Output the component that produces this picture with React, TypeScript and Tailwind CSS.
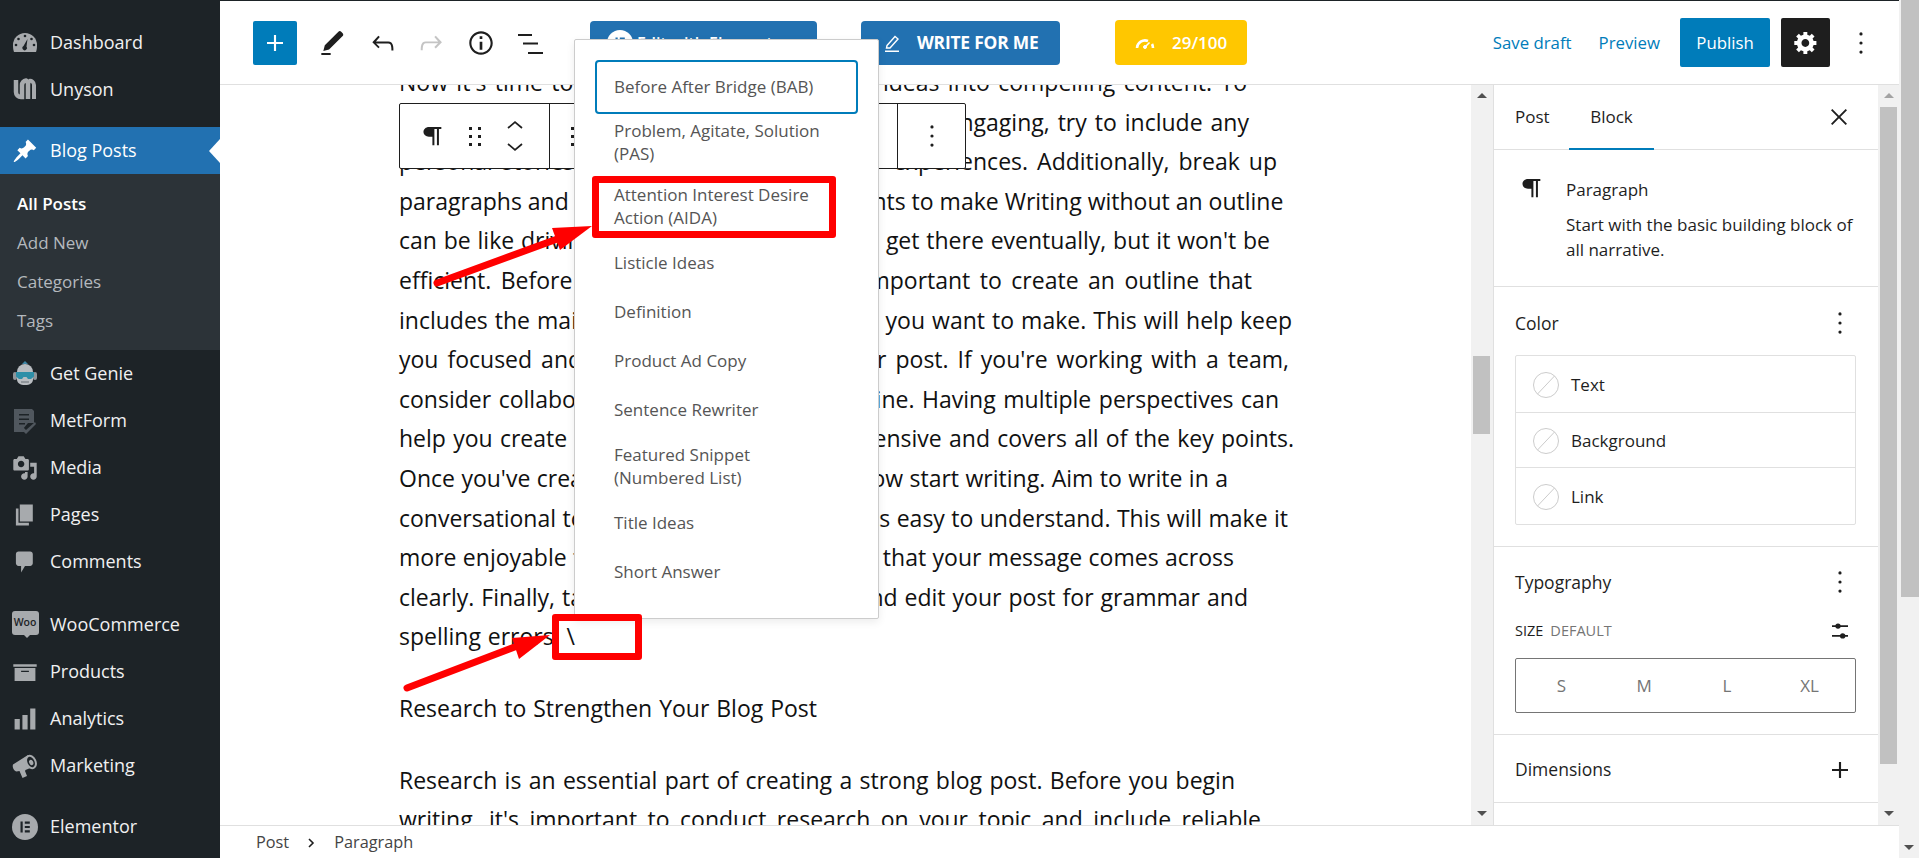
import type { ReactNode } from 'react';

const ic = 'w-[26px] h-[26px] shrink-0';

function Dashboard() {
  return (
    <svg viewBox="0 0 26 26" className={ic}>
      <path fill="#a7aaad" d="M2 22C1.300 20 1 18.500 1 15a12 12 0 0 1 24 0c0 3.500-.3 5-1 7z" />
      <circle cx="13" cy="6" r="1.300" fill="#1d2327" />
      <circle cx="6.500" cy="9" r="1.300" fill="#1d2327" />
      <circle cx="19.500" cy="9" r="1.300" fill="#1d2327" />
      <circle cx="4" cy="15" r="1.300" fill="#1d2327" />
      <circle cx="22" cy="15" r="1.300" fill="#1d2327" />
      <path fill="#1d2327" d="M15.500 9l-1 7.500a2.300 2.300 0 1 1-3-.5z" />
    </svg>
  );
}

function Unyson() {
  return (
    <svg viewBox="0 0 26 26" className={ic}>
      <path fill="none" stroke="#a7aaad" strokeWidth="4.500" d="M4 3v12a5 5 0 0 0 5 5h1V8a4.500 4.500 0 0 1 4-4.500A4 4 0 0 1 16 8v14" />
      <path fill="none" stroke="#a7aaad" strokeWidth="4" d="M22 22V8a4 4 0 0 0-5-4" />
    </svg>
  );
}

function Pin() {
  return (
    <svg viewBox="0 0 20 20" className={ic} fill="#fff">
      <path d="M10.440 3.020l1.820-1.820 6.360 6.350-1.830 1.820c-1.050-.68-2.480-.57-3.410.36l-.75.75c-.92.93-1.040 2.350-.35 3.410l-1.830 1.820-2.410-2.410-2.800 2.790c-.42.42-3.380 2.710-3.800 2.290s1.860-3.390 2.280-3.810l2.790-2.790L4.100 9.360l1.830-1.820c1.050.69 2.480.57 3.400-.36l.75-.75c.93-.92 1.050-2.350.36-3.410z" />
    </svg>
  );
}

function Genie() {
  return (
    <svg viewBox="0 0 26 26" className={ic}>
      <path fill="#3f87a6" d="M13 0l3 3h-6z" />
      <path fill="#b9bdc1" d="M5 11a8 8 0 0 1 16 0v7c0 4-3 6-8 6s-8-2-8-6z" />
      <rect x="1" y="11" width="4" height="8" rx="2" fill="#8f959a" />
      <rect x="21" y="11" width="4" height="8" rx="2" fill="#8f959a" />
      <path fill="#2e8fa8" d="M4 11h18v4.500l-3 2.500h-3l-1.500-2h-3L10 18H7l-3-2.500z" />
      <rect x="9" y="20" width="8" height="2" fill="#8f959a" />
    </svg>
  );
}

function MetForm() {
  return (
    <svg viewBox="0 0 26 26" className={ic}>
      <path fill="#50575e" d="M2 1h18l2 2v12l-6 0-5 6 2 3H2z" />
      <path fill="#1d2327" d="M7 6h10v1.500H7zM7 10.500h10V12H7zM7 15h6v1.500H7z" />
      <path fill="#50575e" d="M11 19l3 3 9-8 1 2-10 10-5-5z" />
    </svg>
  );
}

function Media() {
  return (
    <svg viewBox="0 0 20 20" className={ic} fill="#a7aaad">
      <path d="M13 11V4c0-.55-.45-1-1-1h-1.670L9 1H5L3.670 3H2c-.55 0-1 .45-1 1v7c0 .55.45 1 1 1h10c.55 0 1-.45 1-1zM7 4.500c1.380 0 2.500 1.120 2.500 2.500S8.380 9.500 7 9.500 4.500 8.380 4.500 7 5.620 4.500 7 4.500zM14 6h5v10.500c0 1.380-1.120 2.500-2.500 2.500S14 17.880 14 16.500s1.120-2.500 2.500-2.500c.17 0 .34.02.5.05V9h-3V6zm-4 8.050V13h2v3.500c0 1.380-1.120 2.500-2.500 2.500S7 17.880 7 16.500 8.120 14 9.500 14c.17 0 .34.02.5.05z" />
    </svg>
  );
}

function Pages() {
  return (
    <svg viewBox="0 0 20 20" className={ic} fill="#a7aaad">
      <path d="M6 15V2h10v13H6zm-1 1h8v2H3V5h2v11z" />
    </svg>
  );
}

function Comments() {
  return (
    <svg viewBox="0 0 20 20" className={ic} fill="#a7aaad">
      <path d="M5 2h9c1.100 0 2 .9 2 2v7c0 1.100-.9 2-2 2h-4l-3 5v-5H5c-1.100 0-2-.9-2-2V4c0-1.100.9-2 2-2z" />
    </svg>
  );
}

function Woo() {
  return (
    <span className="relative -mt-[4px] flex h-[24px] w-[27px] shrink-0 items-center justify-center rounded-[3px] bg-[#a7aaad] text-[10.500px] font-semibold leading-none text-[#1d2327]">
      Woo
      <span className="absolute -bottom-[3px] left-[12px] h-0 w-0 border-x-[3px] border-t-[3px] border-x-transparent border-t-[#a7aaad]" />
    </span>
  );
}

function Products() {
  return (
    <svg viewBox="0 0 20 20" className={ic} fill="#a7aaad">
      <path d="M19 4v2H1V4h18zM2 7h16v10H2V7zm11 3V9H7v1h6z" />
    </svg>
  );
}

function Analytics() {
  return (
    <svg viewBox="0 0 20 20" className={ic} fill="#a7aaad">
      <path d="M18 18V2h-4v16h4zm-6 0V7H8v11h4zm-6 0v-8H2v8h4z" />
    </svg>
  );
}

function Marketing() {
  return (
    <svg viewBox="0 0 26 26" className={ic}>
      <path fill="#a7aaad" d="M1 11.500L16 2l7 11-9.500 4-.5 1 2 5-4.500 2-3-7-3 .5C2 18 0 14 1 11.500z" />
      <ellipse cx="19" cy="9" rx="5.500" ry="7.500" transform="rotate(-25 19 9)" fill="#a7aaad" />
      <ellipse cx="19" cy="9" rx="3.500" ry="5.500" transform="rotate(-25 19 9)" fill="#1d2327" />
      <ellipse cx="19" cy="9.500" rx="2" ry="2.800" transform="rotate(-25 19 9)" fill="#a7aaad" />
    </svg>
  );
}

function ElementorLogo({ bg, fg }: { bg: string; fg: string }) {
  return (
    <svg viewBox="0 0 26 26" className={ic}>
      <circle cx="13" cy="13" r="13" fill={bg} />
      <path fill={fg} d="M8.500 7.500h2.200v11H8.500zM12.800 7.500h5v2.200h-5zM12.800 11.900h5v2.200h-5zM12.800 16.300h5v2.200h-5z" />
    </svg>
  );
}

function NavItem({ icon, label, active }: { icon: ReactNode; label: string; active?: boolean }) {
  return (
    <div className={`relative flex h-[47px] items-center ${active ? 'bg-[#2271b1] text-white' : 'text-[#f0f0f1]'}`}>
      <span className="flex w-[50px] shrink-0 justify-center">{icon}</span>
      <span className="text-[18px]">{label}</span>
      {active && (
        <span className="absolute right-0 top-[12px] h-0 w-0 border-y-[12px] border-r-[11px] border-y-transparent border-r-white" />
      )}
    </div>
  );
}

function Sidebar() {
  return (
    <aside className="w-[220px] shrink-0 bg-[#1d2327] pt-[19px]">
      <NavItem icon={<Dashboard />} label="Dashboard" />
      <NavItem icon={<Unyson />} label="Unyson" />
      <div className="h-[14px]" />
      <NavItem icon={<Pin />} label="Blog Posts" active />
      <div className="h-[176px] bg-[#2c3338] pl-[17px] pt-[10px] text-[17px] leading-[39px] text-[#b4b9be]">
        <div className="font-semibold text-white">All Posts</div>
        <div>Add New</div>
        <div>Categories</div>
        <div>Tags</div>
      </div>
      <NavItem icon={<Genie />} label="Get Genie" />
      <NavItem icon={<MetForm />} label="MetForm" />
      <NavItem icon={<Media />} label="Media" />
      <NavItem icon={<Pages />} label="Pages" />
      <NavItem icon={<Comments />} label="Comments" />
      <div className="h-[16px]" />
      <NavItem icon={<Woo />} label="WooCommerce" />
      <NavItem icon={<Products />} label="Products" />
      <NavItem icon={<Analytics />} label="Analytics" />
      <NavItem icon={<Marketing />} label="Marketing" />
      <div className="h-[14px]" />
      <NavItem icon={<ElementorLogo bg="#a7aaad" fg="#1d2327" />} label="Elementor" />
    </aside>
  );
}

function Dots({ className = '' }: { className?: string }) {
  return (
    <svg viewBox="0 0 24 24" className={`h-[32px] w-[32px] ${className}`} fill="#1e1e1e">
      <circle cx="12" cy="5.200" r="1.200" />
      <circle cx="12" cy="12" r="1.200" />
      <circle cx="12" cy="18.800" r="1.200" />
    </svg>
  );
}

function Icon24({ d, className = '', fill = '#1e1e1e' }: { d: string; className?: string; fill?: string }) {
  return (
    <svg viewBox="0 0 24 24" className={`h-[32px] w-[32px] shrink-0 ${className}`} fill={fill}>
      <path d={d} />
    </svg>
  );
}

function Header() {
  return (
    <header className="flex h-[84px] shrink-0 items-center border-b border-[#e0e0e0] bg-white pl-[33px]">
      <button className="flex h-[44px] w-[44px] items-center justify-center rounded-[2px] bg-[#007cba]">
        <Icon24 fill="#fff" d="M18 11.200h-5.200V6h-1.600v5.200H6v1.600h5.200V18h1.600v-5.200H18z" />
      </button>
      <Icon24 className="ml-[19px]" d="M4 21h7v-1.500H4V21zM18.900 3.500c-.6-.6-1.500-.6-2.100 0L6.600 13.700l-1.100 4.300 4.300-1.100L20 6.700c.6-.6.6-1.500 0-2.100l-1.100-1.100z" />
      <Icon24 className="ml-[19px]" d="M18.300 11.700c-.6-.6-1.400-.9-2.300-.9H6.700l2.900-3.300-1.100-1-4.500 5L8.500 16l1-1-2.700-2.700H16c.5 0 .9.2 1.300.5 1 1 1 3.400 1 4.500v.3h1.500v-.2c0-1.500 0-4.300-1.500-5.700z" />
      <Icon24 className="ml-[16px]" fill="#c4c4c4" d="M15.600 6.500l-1.100 1 2.900 3.300H8c-.9 0-1.700.3-2.300.9-1.400 1.500-1.400 4.200-1.400 5.600v.2h1.500v-.3c0-1.100 0-3.500 1-4.500.3-.3.7-.5 1.300-.5h9.200L14.500 15l1.100 1.100 4.600-4.600-4.600-5z" />
      <Icon24 className="ml-[18px]" d="M12 3.200c-4.800 0-8.800 3.900-8.800 8.800 0 4.800 3.900 8.800 8.800 8.800 4.800 0 8.800-3.900 8.800-8.800 0-4.800-4-8.800-8.800-8.800zm0 16c-4 0-7.200-3.300-7.200-7.200C4.800 8 8 4.800 12 4.800s7.200 3.300 7.200 7.200c0 4-3.200 7.200-7.200 7.200zM11 17h2v-6h-2v6zm0-8h2V7h-2v2z" />
      <svg viewBox="0 0 32 32" className="ml-[17px] h-[32px] w-[32px] shrink-0" fill="#1e1e1e">
        <path d="M4 7h14v2H4zM9 15.500h15v2H9zM14 25h15v2H14z" />
      </svg>
      <button className="ml-[44px] flex h-[44px] w-[227px] items-center rounded-[4px] bg-[#2271b1] pl-[17px] text-[16px] font-semibold text-white">
        <ElementorLogo bg="#fff" fg="#2271b1" />
        <span className="ml-[4px]">Edit with Elementor</span>
      </button>
      <button className="ml-[44px] flex h-[44px] w-[199px] items-center rounded-[4px] bg-[#2271b1] pl-[21px] text-[17.400px] font-bold text-white">
        <svg viewBox="0 0 20 20" className="h-[20px] w-[20px] shrink-0" fill="none" stroke="#fff" strokeWidth="1.400">
          <path d="M5 12.500L13 3.500l3 2.500-8 9H4.500zM3 18.300h14" />
        </svg>
        <span className="ml-[15px] tracking-[-0.2px]">WRITE FOR ME</span>
      </button>
      <button className="ml-[55px] flex h-[45px] w-[132px] items-center rounded-[4px] bg-[#ffc700] pl-[20px] text-[17px] font-semibold text-white">
        <svg viewBox="0 0 20 14" className="h-[14px] w-[20px] shrink-0" fill="none" stroke="#fff" strokeWidth="2.600">
          <path d="M2 12a8 8 0 0 1 11-7" />
          <path d="M18 12a8 8 0 0 0-1-4" />
          <circle cx="10" cy="11" r="1.500" fill="#fff" strokeWidth="1" />
          <path d="M10.500 10.500l4-4" strokeWidth="1.600" />
        </svg>
        <span className="ml-[17px]">29/100</span>
      </button>
      <div className="flex-1" />
      <span className="text-[16.800px] text-[#007cba]">Save draft</span>
      <span className="ml-[27px] text-[16.800px] text-[#007cba]">Preview</span>
      <button className="ml-[20px] flex h-[49px] w-[90px] items-center justify-center rounded-[2px] bg-[#007cba] text-[16.800px] text-white">Publish</button>
      <button className="ml-[11px] flex h-[49px] w-[49px] items-center justify-center rounded-[2px] bg-[#1e1e1e]">
        <svg viewBox="0 0 20 20" className="h-[26px] w-[26px]" fill="#fff">
          <path d="M18 11.500h-2.180c-.17.7-.44 1.350-.81 1.930l1.540 1.540-2.100 2.100-1.540-1.540c-.58.36-1.230.63-1.910.79V18.500h-3v-2.180c-.68-.16-1.330-.43-1.910-.79L4.550 17.070 2.430 14.950l1.540-1.540c-.36-.58-.63-1.230-.79-1.910H1V8.530h2.170c.16-.7.44-1.350.8-1.940L2.430 5.050l2.100-2.100 1.540 1.540c.58-.37 1.240-.64 1.930-.81V1.500h3v2.180c.68.16 1.330.43 1.910.79l1.540-1.540 2.120 2.120-1.540 1.540c.36.59.64 1.240.8 1.940H18v2.970zM9.500 13c1.660 0 3-1.340 3-3s-1.340-3-3-3-3 1.340-3 3 1.340 3 3 3z" />
        </svg>
      </button>
      <Dots className="ml-[15px]" />
      <div className="w-[22px]" />
    </header>
  );
}

const lineClass = 'whitespace-nowrap [text-align-last:justify]';

const firstParagraph = [
  { text: "Now it's time to turn your outline and your ideas into compelling content. To", width: 'w-[848px]' },
  { text: 'make your blog posts more interesting and really engaging, try to include any', width: 'w-[850px]' },
  { text: 'personal stories, examples, and any of your experiences. Additionally, break up', width: 'w-[878px]' },
  { text: 'paragraphs and add headings and bullet points to make Writing without an outline', width: 'w-[883px]' },
  { text: "can be like driving without any map. You will get there eventually, but it won't be", width: 'w-[871px]' },
  { text: "efficient. Before you begin writing, it's so important to create an outline that", width: 'w-[853px]' },
  { text: 'includes the main points and the arguments you want to make. This will help keep', width: 'w-[893px]' },
  { text: "you focused and organized throughout your post. If you're working with a team,", width: 'w-[890px]' },
  { text: 'consider collaborating with them on an outline. Having multiple perspectives can', width: 'w-[880px]' },
  { text: 'help you create a blog post that is comprehensive and covers all of the key points.', width: 'w-[895px]' },
  { text: "Once you've created your outline, you can now start writing. Aim to write in a", width: 'w-[829px]' },
  { text: 'conversational tone and use the words that is easy to understand. This will make it', width: 'w-[889px]' },
  { text: 'more enjoyable for your readers and ensure that your message comes across', width: 'w-[835px]' },
  { text: 'clearly. Finally, take the time to proofread and edit your post for grammar and', width: 'w-[849px]' },
  { text: 'spelling errors. \\', width: 'w-[176px]' },
];

function BlockToolbar() {
  return (
    <div className="absolute left-[179px] top-[18px] flex h-[66px] w-[567px] rounded-[2px] border border-[#1e1e1e] bg-white">
      <div className="relative flex w-[150px] items-center border-r border-[#1e1e1e]">
        <svg viewBox="0 0 24 24" className="ml-[16px] h-[32px] w-[32px]" fill="#1e1e1e">
          <path d="M9.700 5.200H19v1.500h-1.800V19h-1.500V6.700h-1.900V19h-1.500v-6.400H9.700c-2.300 0-4.100-1.600-4.100-3.700s1.800-3.700 4.100-3.700z" />
        </svg>
        <svg viewBox="0 0 16 24" className="ml-[19px] h-[24px] w-[16px]" fill="#1e1e1e">
          <path d="M2 3h3v3H2zM11 3h3v3h-3zM2 11h3v3H2zM11 11h3v3h-3zM2 19h3v3H2zM11 19h3v3h-3z" />
        </svg>
        <svg viewBox="0 0 18 36" className="ml-[23px] h-[36px] w-[18px]" fill="none" stroke="#1e1e1e" strokeWidth="1.700">
          <path d="M2 10l7-6 7 6M2 26l7 6 7-6" />
        </svg>
      </div>
      <div className="flex w-[348px] items-center border-r border-[#1e1e1e] pl-[21px]">
        <svg viewBox="0 0 4 24" className="h-[24px] w-[4px]" fill="#1e1e1e">
          <path d="M0 3h4v3H0zM0 11h4v3H0zM0 19h4v3H0z" />
        </svg>
      </div>
      <div className="flex flex-1 items-center justify-center">
        <Dots />
      </div>
    </div>
  );
}

function Editor() {
  return (
    <main className="relative flex-1 overflow-hidden bg-white pl-[179px] text-[23px] leading-[39.600px] text-[#111]">
      <div className="-mt-[22px]">
        {firstParagraph.map((line) => (
          <div key={line.text} className={`${lineClass} ${line.width}`}>{line.text}</div>
        ))}
        <p className={`mt-[32px] w-[418px] ${lineClass}`}>Research to Strengthen Your Blog Post</p>
        <p className={`mt-[32px] w-[836px] ${lineClass}`}>Research is an essential part of creating a strong blog post. Before you begin</p>
        <p className={`w-[862px] ${lineClass}`}>writing, it's important to conduct research on your topic and include reliable</p>
      </div>
      <BlockToolbar />
    </main>
  );
}

function ScrollBar({ top, height, panel = false }: { top: string; height: string; panel?: boolean }) {
  return (
    <div className={`relative h-full shrink-0 bg-[#f1f1f1] ${panel ? 'w-[21px]' : 'w-[22px]'}`}>
      <span className={`absolute left-[6px] top-[8px] h-0 w-0 border-x-[5px] border-b-[5px] border-x-transparent ${panel ? 'border-b-[#a3a3a3]' : 'border-b-[#505050]'}`} />
      <div className={`absolute left-[2px] w-[17px] bg-[#c1c1c1] ${top} ${height}`} />
      <span className="absolute bottom-[9px] left-[6px] h-0 w-0 border-x-[5px] border-t-[5px] border-x-transparent border-t-[#505050]" />
    </div>
  );
}

function Swatch({ label, mid }: { label: string; mid?: boolean }) {
  return (
    <div className={`flex h-[56px] items-center pl-[17px] pt-[2px] ${mid ? 'border-y border-[#e0e0e0]' : ''}`}>
      <svg viewBox="0 0 26 26" className="h-[26px] w-[26px]" fill="none" stroke="#ccc" strokeWidth="1">
        <circle cx="13" cy="13" r="12.500" />
        <path d="M4.500 22L21.500 4" />
      </svg>
      <span className="ml-[12px] text-[17px] text-[#1e1e1e]">{label}</span>
    </div>
  );
}

function SettingsPanel() {
  return (
    <section className="w-[385px] shrink-0 border-l border-[#e0e0e0] bg-white text-[#1e1e1e]">
      <div className="relative flex h-[65px] items-center border-b border-[#e0e0e0] text-[17px] font-medium">
        <span className="ml-[21px] w-[54px]">Post</span>
        <span className="relative flex h-full w-[85px] items-center justify-center">
          Block
          <span className="absolute bottom-[-1px] left-0 right-0 h-[2px] bg-[#007cba]" />
        </span>
        <svg viewBox="0 0 24 24" className="absolute left-[329px] top-[16px] h-[32px] w-[32px]" fill="#1e1e1e">
          <path d="M13 12l5-5-1-1-5 5-5-5-1 1 5 5-5 5 1 1 5-5 5 5 1-1z" />
        </svg>
      </div>
      <div className="flex h-[137px] border-b border-[#e0e0e0] pl-[21px] pt-[22px]">
        <svg viewBox="0 0 24 24" className="h-[32px] w-[32px] shrink-0" fill="#1e1e1e">
          <path d="M9.700 5.200H19v1.500h-1.800V19h-1.500V6.700h-1.900V19h-1.500v-6.400H9.700c-2.300 0-4.100-1.600-4.100-3.700s1.800-3.700 4.100-3.700z" />
        </svg>
        <div className="ml-[19px] pt-[5px] text-[17px]">
          <div className="font-medium leading-[26px]">Paragraph</div>
          <div className="mt-[9px] w-[300px] leading-[25px]">Start with the basic building block of all narrative.</div>
        </div>
      </div>
      <div className="h-[260px] border-b border-[#e0e0e0] px-[21px] pt-[20px]">
        <div className="flex h-[32px] items-center justify-between">
          <span className="text-[17.500px] font-medium">Color</span>
          <Dots className="mr-[1px]" />
        </div>
        <div className="mt-[16px] w-[341px] rounded-[2px] border border-[#e0e0e0]">
          <Swatch label="Text" />
          <Swatch label="Background" mid />
          <Swatch label="Link" />
        </div>
      </div>
      <div className="h-[188px] border-b border-[#e0e0e0] px-[21px] pt-[19px]">
        <div className="flex h-[32px] items-center justify-between">
          <span className="text-[17.500px] font-medium">Typography</span>
          <Dots className="mr-[1px]" />
        </div>
        <div className="mt-[21px] flex h-[24px] items-center justify-between text-[14.500px] uppercase">
          <span>
            <span className="font-medium">Size</span>
            <span className="ml-[7px] text-[#757575]">Default</span>
          </span>
          <svg viewBox="0 0 24 24" className="mr-[1px] h-[32px] w-[32px]" fill="#1e1e1e">
            <path d="M6 7.700h12v1.300H6zM6 15h12v1.300H6z" />
            <circle cx="10.500" cy="8.300" r="2" />
            <circle cx="14" cy="15.700" r="2" />
          </svg>
        </div>
        <div className="mt-[15px] grid h-[55px] w-[341px] grid-cols-4 items-center rounded-[2px] border border-[#757575] px-[4px] text-center text-[17px] text-[#757575]">
          <span>S</span>
          <span>M</span>
          <span>L</span>
          <span>XL</span>
        </div>
      </div>
      <div className="flex h-[68px] items-center justify-between border-b border-[#e0e0e0] pl-[21px] pr-[22px] pt-[2px]">
        <span className="text-[17.500px] font-medium">Dimensions</span>
        <svg viewBox="0 0 24 24" className="h-[32px] w-[32px]" fill="#1e1e1e">
          <path d="M18 11.200h-5.200V6h-1.600v5.200H6v1.600h5.200V18h1.600v-5.200H18z" />
        </svg>
      </div>
    </section>
  );
}

const popupItem = 'px-[19px] text-[17px] leading-[23px] text-[#555]';

function Popup() {
  return (
    <div className="absolute left-[574px] top-[39px] h-[580px] w-[305px] rounded-[2px] border border-[#ccc] bg-white px-[20px] pt-[20px] shadow-[0_3px_8px_rgba(0,0,0,0.08)]">
      <div className="-mb-[4px] flex h-[54px] items-center rounded-[4px] border-2 border-[#007cba] px-[17px] text-[17px] text-[#555]">Before After Bridge (BAB)</div>
      <div className={`${popupItem} py-[9px]`}>Problem, Agitate, Solution<br />(PAS)</div>
      <div className={`${popupItem} py-[9px]`}>Attention Interest Desire<br />Action (AIDA)</div>
      <div className={`${popupItem} py-[13px]`}>Listicle Ideas</div>
      <div className={`${popupItem} py-[13px]`}>Definition</div>
      <div className={`${popupItem} py-[13px]`}>Product Ad Copy</div>
      <div className={`${popupItem} py-[13px]`}>Sentence Rewriter</div>
      <div className={`${popupItem} py-[9px]`}>Featured Snippet<br />(Numbered List)</div>
      <div className={`${popupItem} py-[13px]`}>Title Ideas</div>
      <div className={`${popupItem} py-[13px]`}>Short Answer</div>
    </div>
  );
}

function Annotations() {
  return (
    <>
      <div className="absolute left-[592px] top-[176px] h-[62px] w-[244px] rounded-[3px] border-[7px] border-[#ff0000]" />
      <div className="absolute left-[552px] top-[614px] h-[46px] w-[90px] rounded-[3px] border-[7px] border-[#ff0000]" />
      <svg className="pointer-events-none absolute left-0 top-0 h-[858px] w-[1919px]" viewBox="0 0 1919 858" fill="#ff0000" stroke="none">
        <path d="M437 283L560 238" stroke="#ff0000" strokeWidth="7" strokeLinecap="round" />
        <path d="M592 226L552 228L560 250z" />
        <path d="M407 688L520 645" stroke="#ff0000" strokeWidth="7" strokeLinecap="round" />
        <path d="M550 635L512 638L519 659z" />
      </svg>
    </>
  );
}

export default function App() {
  return (
    <div className="relative flex h-[858px] w-[1919px] overflow-hidden bg-white font-['Open_Sans',sans-serif]">
      <Sidebar />
      <div className="flex w-[1679px] shrink-0 flex-col border-t border-[#1d2327]">
        <Header />
        <div className="flex min-h-0 flex-1">
          <Editor />
          <ScrollBar top="top-[271px]" height="h-[78px]" />
          <SettingsPanel />
          <ScrollBar top="top-[22px]" height="h-[657px]" panel />
        </div>
        <footer className="flex h-[33px] shrink-0 items-center border-t border-[#e0e0e0] pl-[36px] pt-[1px] text-[16.300px] text-[#444]">
          <span>Post</span>
          <svg viewBox="0 0 12 12" className="ml-[16px] h-[12px] w-[12px]" fill="none" stroke="#1e1e1e" strokeWidth="1.600">
            <path d="M4 2l4 4-4 4" />
          </svg>
          <span className="ml-[17px]">Paragraph</span>
        </footer>
      </div>
      <div className="relative w-[20px] shrink-0 bg-[#f1f1f1]">
        <div className="ml-[2px] h-[597px] bg-[#c1c1c1]" />
        <span className="absolute bottom-[8px] left-[5px] h-0 w-0 border-x-[5px] border-t-[5px] border-x-transparent border-t-[#505050]" />
      </div>
      <Popup />
      <Annotations />
    </div>
  );
}
